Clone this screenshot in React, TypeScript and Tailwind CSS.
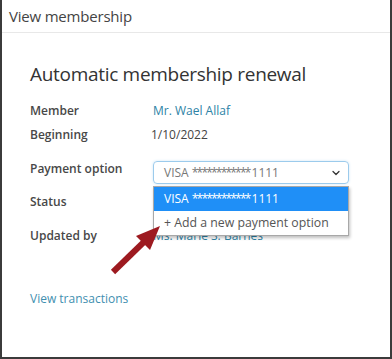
import { ChevronDown } from "lucide-react";

const font = { fontFamily: '"Open Sans", "Liberation Sans", sans-serif' };

function Row({ label, children, className = "" }: { label: string; children?: React.ReactNode; className?: string }) {
  return (
    <div className={`flex items-start ${className}`}>
      <div className="w-[123px] shrink-0 text-[12px] leading-5 font-semibold text-[#484848]">{label}</div>
      <div className="flex-1 text-[12px] leading-5">{children}</div>
    </div>
  );
}

function Card() {
  return (
    <span>
      VISA <span className="tracking-[-1.8px]">************</span>
      <span className="ml-[2px]">1111</span>
    </span>
  );
}

export default function App() {
  return (
    <div style={font} className="relative w-[392px] h-[359px] bg-white border-x-2 border-b-2 border-[#3b3b3b] overflow-hidden">
      {/* Header */}
      <div className="h-[33px] border-b border-[#e8e8e8] pl-[7px] flex items-center">
        <span className="text-[15px] text-[#444] tracking-[-0.2px]">View membership</span>
      </div>

      <div className="pl-[28px] pr-[40px]">
        <h1 className="mt-[29px] text-[19px] leading-6 text-[#333] tracking-[-0.3px]">Automatic membership renewal</h1>

        <Row label="Member" className="mt-[15px]">
          <span className="text-[#2d83a6]">Mr. Wael Allaf</span>
        </Row>
        <Row label="Beginning" className="mt-[4px]">
          <span className="text-[#444] -ml-[2px]">1/10/2022</span>
        </Row>
        <Row label="Payment option" className="mt-[14px]">
          <div className="relative mt-[2px]">
            <div className="h-[23px] w-[196px] rounded-[4px] border border-[#9ccbec] shadow-[0_0_3px_#cfe6f7] flex items-center pl-[10px] pr-[6px]">
              <span className="flex-1 text-[12px] text-[#777]"><Card /></span>
              <ChevronDown className="w-3 h-3 text-[#333]" strokeWidth={2.5} />
            </div>
            {/* Open dropdown */}
            <div className="absolute z-10 left-0 top-[25px] w-[196px] bg-white border border-[#a8a8a8] shadow-[1px_2px_3px_rgba(0,0,0,0.25)]">
              <div className="h-[24px] bg-[#1f8ff7] text-white text-[12px] flex items-center pl-[10px]"><Card /></div>
              <div className="h-[24px] text-[#555] text-[12.3px] flex items-center pl-[10px]">+ Add a new payment option</div>
            </div>
          </div>
        </Row>
        <Row label="Status" className="mt-[8px]" />
        <Row label="Updated by" className="mt-[14px]">
          <span className="text-[#2d83a6]">Ms. Marie S. Barnes</span>
        </Row>

        <div className="mt-[43px] text-[12px] leading-5 text-[#3f8fb0]">View transactions</div>
      </div>

      {/* Annotation arrow */}
      <svg className="absolute left-0 top-0 z-20 pointer-events-none" width="392" height="359" viewBox="0 0 392 359">
        <line x1="111" y1="272" x2="146" y2="238" stroke="#9d1a20" strokeWidth="6" />
        <polygon points="158,226 134,236 148,250" fill="#9d1a20" />
      </svg>
    </div>
  );
}
